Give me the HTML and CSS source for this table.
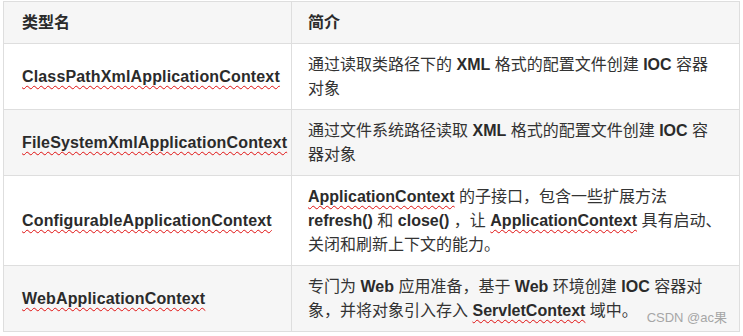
FILE: index.html
```html
<!DOCTYPE html>
<html lang="zh-CN">
<head>
    <meta charset="UTF-8">
    <meta name="viewport" content="width=device-width, initial-scale=1.0">
    <title>ApplicationContext 实现类</title>
    <link rel="stylesheet" href="styles.css">
</head>
<body>
    <div class="wrap">
        <table class="ctx-table">
            <colgroup>
                <col class="col-name">
                <col class="col-desc">
            </colgroup>
            <thead>
                <tr>
                    <th>类型名</th>
                    <th>简介</th>
                </tr>
            </thead>
            <tbody>
                <tr>
                    <td class="name"><b class="typo">ClassPathXmlApplicationContext</b></td>
                    <td>通过读取类路径下的 <b>XML</b> 格式的配置文件创建 <b>IOC</b> 容器对象</td>
                </tr>
                <tr>
                    <td class="name"><b class="typo">FileSystemXmlApplicationContext</b></td>
                    <td>通过文件系统路径读取 <b>XML</b> 格式的配置文件创建 <b>IOC</b> 容器对象</td>
                </tr>
                <tr>
                    <td class="name"><b class="typo">ConfigurableApplicationContext</b></td>
                    <td><b class="typo">ApplicationContext</b> 的子接口，包含一些扩展方法 <b>refresh()</b> 和 <b>close()</b> ，让 <b class="typo">ApplicationContext</b> 具有启动、关闭和刷新上下文的能力。</td>
                </tr>
                <tr>
                    <td class="name"><b class="typo">WebApplicationContext</b></td>
                    <td>专门为 <b>Web</b> 应用准备，基于 <b>Web</b> 环境创建 <b>IOC</b> 容器对象，并将对象引入存入 <b class="typo">ServletContext</b> 域中。</td>
                </tr>
            </tbody>
        </table>
        <span class="mark">CSDN @ac果</span>
    </div>
</body>
</html>
```

FILE: styles.css
```css
body {
    margin: 0;
    background: #fff;
    font-family: "Liberation Sans", Arial, "Noto Sans CJK SC", sans-serif;
    color: #333;
}

.wrap {
    position: relative;
    padding: 1px 3px 0;
    width: 737px;
}

.ctx-table {
    width: 737px;
    border-collapse: collapse;
    table-layout: fixed;
    font-size: 16px;
    line-height: 24px;
}

.col-name {
    width: 288px;
}

th,
td {
    border: 1px solid #dedede;
    padding: 9px 17px 8px 16px;
    text-align: left;
    vertical-align: middle;
}

th {
    font-weight: bold;
    color: #2b2b2b;
}

th:first-child,
td.name {
    padding-left: 18px;
}

td.name b {
    letter-spacing: 0.15px;
}

thead tr,
tbody tr:nth-child(even) {
    background: #f6f6f6;
}

b {
    color: #2b2b2b;
}

/* red squiggle under unknown words */
.typo {
    text-decoration: underline wavy #e01010;
    text-decoration-thickness: 1px;
    text-underline-offset: 3px;
}

.mark {
    position: absolute;
    right: 16px;
    bottom: 6px;
    font-size: 13px;
    line-height: 16px;
    color: #a6a6a6;
}
```
